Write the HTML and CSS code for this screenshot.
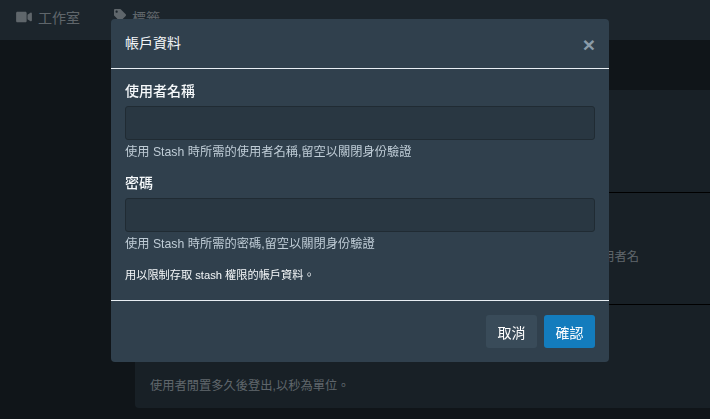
FILE: index.html
```html
<!DOCTYPE html>
<html lang="zh-Hant">
<head>
<meta charset="utf-8">
<title>帳戶資料</title>
<link rel="stylesheet" href="styles.css">
</head>
<body>
<nav class="nav">
  <a class="nav-item">
    <svg class="nav-icon video" viewBox="0 0 576 512"><path d="M336.2 64H47.8C21.4 64 0 85.4 0 111.8v288.4C0 426.6 21.4 448 47.8 448h288.4c26.4 0 47.8-21.4 47.8-47.8V111.8c0-26.4-21.4-47.8-47.8-47.8zm189.4 37.7L416 177.3v157.4l109.6 75.5c21.2 14.6 50.4-.3 50.4-25.8V127.5c0-25.4-29.1-40.4-50.4-25.8z"/></svg>
    <span>工作室</span>
  </a>
  <a class="nav-item">
    <svg class="nav-icon tag" viewBox="0 0 512 512"><path d="M0 252.118V48C0 21.49 21.49 0 48 0h204.118a48 48 0 0 1 33.941 14.059l211.882 211.882c18.745 18.745 18.745 49.137 0 67.882L293.823 497.941c-18.745 18.745-49.137 18.745-67.882 0L14.059 286.059A48 48 0 0 1 0 252.118zM112 64c-26.51 0-48 21.49-48 48s21.49 48 48 48 48-21.49 48-48-21.49-48-48-48z"/></svg>
    <span>標籤</span>
  </a>
</nav>
<main class="main">
  <section class="card">
    <div class="row row-a"></div>
    <div class="row row-b"><span class="row-note">使用者名</span></div>
    <div class="row row-c"><span class="row-help">使用者閒置多久後登出,以秒為單位。</span></div>
  </section>
</main>
<div class="backdrop"></div>
<div class="modal">
  <header class="modal-header">
    <h2 class="modal-title">帳戶資料</h2>
    <span class="close">×</span>
  </header>
  <div class="modal-body">
    <div class="field">
      <label class="label">使用者名稱</label>
      <input class="input" type="text">
      <p class="help">使用 Stash 時所需的使用者名稱,留空以關閉身份驗證</p>
    </div>
    <div class="field">
      <label class="label">密碼</label>
      <input class="input" type="password">
      <p class="help">使用 Stash 時所需的密碼,留空以關閉身份驗證</p>
    </div>
    <p class="note">用以限制存取 stash 權限的帳戶資料。</p>
  </div>
  <footer class="modal-footer">
    <button class="btn btn-secondary">取消</button>
    <button class="btn btn-primary">確認</button>
  </footer>
</div>
</body>
</html>
```
FILE: styles.css
```css
* { box-sizing: border-box; }
html, body { height: 100%; }
body {
  margin: 0;
  overflow: hidden;
  background: #202b33;
  color: #f5f8fa;
  font-family: "Liberation Sans", "Noto Sans CJK TC", sans-serif;
  font-size: 14px;
}
.nav {
  display: flex;
  height: 40px;
  padding: 0 0 7px 16px;
  background: #394b59;
  color: #bfccd6;
}
.nav-item {
  display: flex;
  align-items: center;
  gap: 6px;
  margin-right: 34px;
}
.nav-item span { font-size: 14px; }
.nav-icon { fill: currentColor; display: block; height: 14px; }
.video { width: 16px; }
.tag { width: 12px; height: 12px; margin-top: -3px; }
.main { padding: 50px 0 0 135px; }
.card {
  background: #30404d;
  border-radius: 4px 0 0 4px;
  height: 318px;
  display: flex;
  flex-direction: column;
  font-size: 12.25px;
  color: #bfccd6;
}
.row { padding: 0 15px; }
.row-a { height: 103px; border-bottom: 1px solid #000; }
.row-b {
  height: 112px;
  border-bottom: 1px solid #000;
  display: flex;
  justify-content: flex-end;
  padding: 54px 71px 0 0;
}
.row-c { flex: 1; padding-top: 71px; }
.backdrop {
  position: fixed;
  inset: 0;
  background: rgba(0, 0, 0, .5);
}
.modal {
  position: fixed;
  left: 111px;
  top: 19px;
  width: 498px;
  height: 343px;
  background: #30404d;
  border-radius: 4px;
  display: flex;
  flex-direction: column;
}
.modal-header {
  height: 50px;
  flex: none;
  padding: 0 14px 3px;
  border-bottom: 1px solid #e8eef3;
  display: flex;
  align-items: center;
  justify-content: space-between;
}
.modal-title { margin: 0; font-size: 14px; font-weight: 400; }
.close {
  font-size: 21px;
  font-weight: 700;
  line-height: 1;
  color: #8a9ba8;
  margin-top: 5px;
}
.modal-body { flex: 1; padding: 14px 14px 0; }
.field { margin-bottom: 14px; }
.label { display: block; font-size: 14px; font-weight: 500; line-height: 17px; margin-bottom: 6px; }
.input {
  display: block;
  width: 100%;
  height: 34px;
  background: #293742;
  border: 1px solid #202b33;
  border-radius: 3px;
}
.help { margin: 4px 0 0; font-size: 12.25px; line-height: 17px; color: #bfccd6; }
.note { margin: 0; font-size: 11.2px; line-height: 17px; color: #f5f8fa; }
.modal-footer {
  height: 62px;
  flex: none;
  border-top: 1px solid #e8eef3;
  padding: 14px 14px 0;
  display: flex;
  justify-content: flex-end;
  gap: 7px;
}
.btn {
  width: 51px;
  height: 33px;
  border: 0;
  border-radius: 3px;
  color: #fff;
  font: inherit;
  padding: 0;
}
.btn-secondary { background: #394b59; }
.btn-primary { background: #137cbd; }
```
